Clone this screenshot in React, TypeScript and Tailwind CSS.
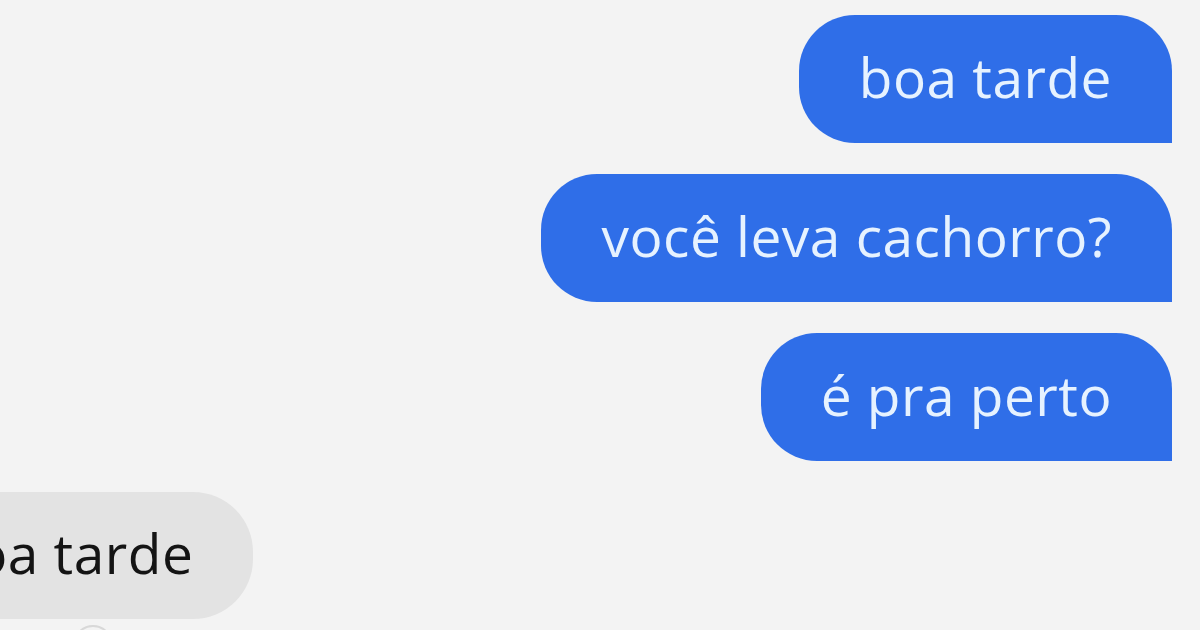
const Bubble = ({ text }: { text: string }) => (
  <div className="h-[128px] flex items-center px-[60px] rounded-[56px] rounded-br-none bg-[#2f6ee8] text-[#e6f2ff]">
    <span className="text-[55px] leading-none tracking-[0.5px] pb-[6px]">{text}</span>
  </div>
)

export default function App() {
  return (
    <div className="w-[1200px] h-[630px] overflow-hidden bg-[#f3f3f3] font-['Open_Sans',sans-serif]">
      <div className="flex flex-col items-end gap-[31px] pt-[15px] pr-[28px]">
        <Bubble text="boa tarde" />
        <Bubble text="você leva cachorro?" />
        <Bubble text="é pra perto" />
      </div>
      <div className="flex flex-col items-start mt-[31px]">
        <div className="h-[127px] flex items-center px-[60px] ml-[-120px] rounded-[60px] rounded-bl-none bg-[#e3e3e3] text-[#141414]">
          <span className="text-[55px] leading-none tracking-[0.5px] pb-[6px]">boa tarde</span>
        </div>
        <div className="ml-[73px] mt-[6px] w-[40px] h-[40px] rounded-full border-2 border-[#d8d8d8]" />
      </div>
    </div>
  )
}
